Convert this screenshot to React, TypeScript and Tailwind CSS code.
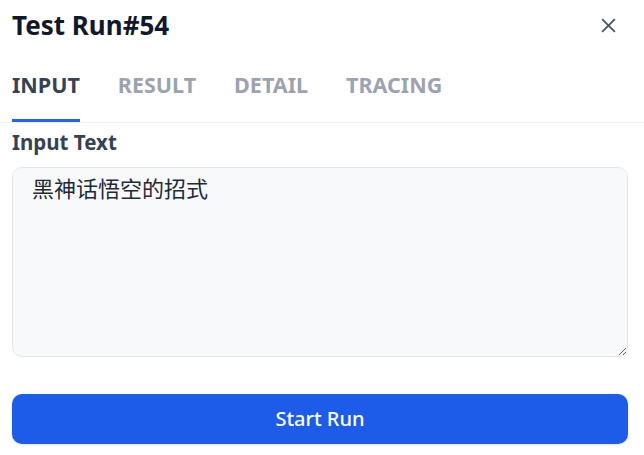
import React from "react";

export default function App() {
  const tabs = ["INPUT", "RESULT", "DETAIL", "TRACING"];
  return (
    <div
      className="w-[644px] h-[455px] bg-white flex flex-col overflow-hidden"
      style={{ fontFamily: '"Noto Sans", "Noto Sans CJK SC", sans-serif' }}
    >
      <div className="flex items-center justify-between pl-3 pr-[28px] h-[50px]">
        <h1 className="text-[26px] font-bold text-[#111827] leading-none">Test Run#54</h1>
        <svg width="15" height="15" viewBox="0 0 14 14" className="text-[#4b5563]">
          <path d="M1.5 1.5 L12.5 12.5 M12.5 1.5 L1.5 12.5" stroke="currentColor" strokeWidth="1.7" strokeLinecap="round" />
        </svg>
      </div>
      <div className="flex gap-[38px] px-3 border-b border-[#eef0f3] h-[73px] items-end">
        {tabs.map((t, i) => (
          <div
            key={t}
            className={
              "pb-[24px] border-b-[3px] text-[21.5px] font-bold leading-none " +
              (i === 0 ? "border-[#2563eb] text-[#374151]" : "border-transparent text-[#9ca3af]")
            }
          >
            {t}
          </div>
        ))}
      </div>
      <div className="flex flex-col pl-3 pr-4">
        <div className="text-[20.5px] font-bold text-[#374151] mt-[5px] leading-[28px]">Input Text</div>
        <textarea
          className="mt-[11px] h-[190px] w-full rounded-[10px] border border-[#e5e7eb] bg-[#f8f9fb] px-[19px] py-[3px] text-[22px] text-[#1f2937] outline-none"
          style={{ fontFamily: '"Noto Sans CJK SC", sans-serif' }}
          defaultValue="黑神话悟空的招式"
        />
        <button className="mt-[37px] h-[50px] w-full rounded-[10px] bg-[#1c5ce8] text-white text-[20px] font-medium shadow-sm">
          Start Run
        </button>
      </div>
    </div>
  );
}
